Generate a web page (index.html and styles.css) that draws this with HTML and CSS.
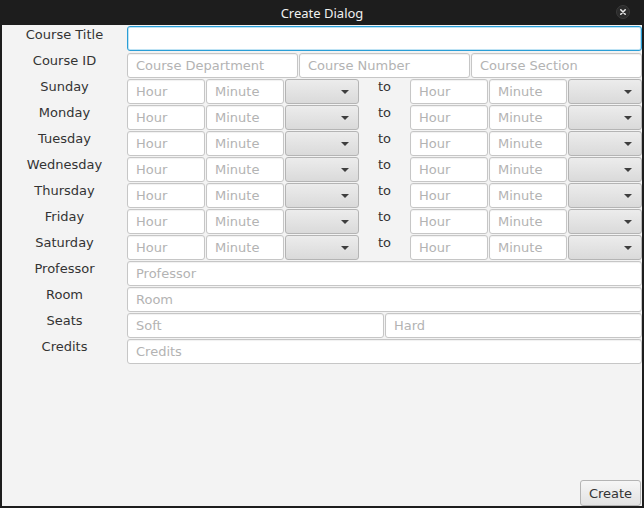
FILE: index.html
```html
<!DOCTYPE html>
<html>
<head>
<meta charset="utf-8">
<link rel="stylesheet" href="styles.css">
</head>
<body>
<div class="window">
  <div class="titlebar">
    <span class="title">Create Dialog</span>
    <span class="close">
      <svg width="14" height="14" viewBox="0 0 14 14"><circle cx="7" cy="7" r="6.5" fill="#2b2b2b" stroke="#3a3a3a" stroke-width="1"/><path d="M4.8 4.8 L9.2 9.2 M9.2 4.8 L4.8 9.2" stroke="#e8e8e8" stroke-width="1.6" stroke-linecap="round"/></svg>
    </span>
  </div>
  <div class="content">
    <div class="form">
      <div class="row first"><div class="label">Course Title</div><div class="fields"><input class="field focused" type="text"></div></div>
      <div class="row"><div class="label">Course ID</div><div class="fields"><input class="field" placeholder="Course Department"><input class="field" placeholder="Course Number"><input class="field" placeholder="Course Section"></div></div>

      <div class="row"><div class="label">Sunday</div><div class="fields time"><input class="field" placeholder="Hour"><input class="field" placeholder="Minute"><div class="combo"><span class="arrow"></span></div><div class="to">to</div><input class="field" placeholder="Hour"><input class="field" placeholder="Minute"><div class="combo"><span class="arrow"></span></div></div></div>
      <div class="row"><div class="label">Monday</div><div class="fields time"><input class="field" placeholder="Hour"><input class="field" placeholder="Minute"><div class="combo"><span class="arrow"></span></div><div class="to">to</div><input class="field" placeholder="Hour"><input class="field" placeholder="Minute"><div class="combo"><span class="arrow"></span></div></div></div>
      <div class="row"><div class="label">Tuesday</div><div class="fields time"><input class="field" placeholder="Hour"><input class="field" placeholder="Minute"><div class="combo"><span class="arrow"></span></div><div class="to">to</div><input class="field" placeholder="Hour"><input class="field" placeholder="Minute"><div class="combo"><span class="arrow"></span></div></div></div>
      <div class="row"><div class="label">Wednesday</div><div class="fields time"><input class="field" placeholder="Hour"><input class="field" placeholder="Minute"><div class="combo"><span class="arrow"></span></div><div class="to">to</div><input class="field" placeholder="Hour"><input class="field" placeholder="Minute"><div class="combo"><span class="arrow"></span></div></div></div>
      <div class="row"><div class="label">Thursday</div><div class="fields time"><input class="field" placeholder="Hour"><input class="field" placeholder="Minute"><div class="combo"><span class="arrow"></span></div><div class="to">to</div><input class="field" placeholder="Hour"><input class="field" placeholder="Minute"><div class="combo"><span class="arrow"></span></div></div></div>
      <div class="row"><div class="label">Friday</div><div class="fields time"><input class="field" placeholder="Hour"><input class="field" placeholder="Minute"><div class="combo"><span class="arrow"></span></div><div class="to">to</div><input class="field" placeholder="Hour"><input class="field" placeholder="Minute"><div class="combo"><span class="arrow"></span></div></div></div>
      <div class="row"><div class="label">Saturday</div><div class="fields time"><input class="field" placeholder="Hour"><input class="field" placeholder="Minute"><div class="combo"><span class="arrow"></span></div><div class="to">to</div><input class="field" placeholder="Hour"><input class="field" placeholder="Minute"><div class="combo"><span class="arrow"></span></div></div></div>

      <div class="row"><div class="label">Professor</div><div class="fields"><input class="field" placeholder="Professor"></div></div>
      <div class="row"><div class="label">Room</div><div class="fields"><input class="field" placeholder="Room"></div></div>
      <div class="row"><div class="label">Seats</div><div class="fields"><input class="field" placeholder="Soft"><input class="field" placeholder="Hard"></div></div>
      <div class="row"><div class="label">Credits</div><div class="fields"><input class="field" placeholder="Credits"></div></div>
    </div>
    <div class="actions"><button class="btn">Create</button></div>
  </div>
</div>
</body>
</html>
```

FILE: styles.css
```css
html, body {
  margin: 0;
  padding: 0;
  background: #1d1d1d;
}
.window {
  width: 644px;
  height: 508px;
  display: flex;
  flex-direction: column;
  background: #1d1d1d;
}
.titlebar {
  height: 25px;
  display: flex;
  align-items: center;
  justify-content: center;
  position: relative;
  color: #f0f0f0;
  font-family: "Noto Sans", sans-serif;
  font-size: 13px;
}
.close {
  position: absolute;
  right: 14px;
  top: 5px;
  width: 14px;
  height: 14px;
  display: flex;
}
.content {
  flex: 1;
  margin: 0 2px 2px 2px;
  background: #f3f3f3;
  display: flex;
  flex-direction: column;
  font-family: "DejaVu Sans", sans-serif;
  font-size: 13px;
  color: #333;
}
.form {
  display: flex;
  flex-direction: column;
  padding-top: 1px;
}
.row {
  display: flex;
  height: 26px;
}
.label {
  flex: 0 0 125px;
  text-align: center;
  line-height: 15px;
  padding-top: 1px;
  color: #333;
}
.fields {
  flex: 1;
  display: flex;
  gap: 1px;
  padding-top: 1px;
  min-width: 0;
}
.row.first .fields {
  padding-top: 0;
}
.field {
  flex: 1;
  min-width: 0;
  box-sizing: border-box;
  height: 25px;
  margin: 0;
  padding: 0 8px;
  border: 1px solid #c6c6c6;
  border-radius: 3px;
  background: #fff;
  box-shadow: inset 0 1px 1px rgba(0,0,0,0.06);
  font-family: "DejaVu Sans", sans-serif;
  font-size: 13px;
  color: #333;
  outline: none;
}
.field::placeholder {
  color: #b3b3b3;
}
.field.focused {
  border: 1px solid #2a9ed6;
  box-shadow: inset 0 0 0 1px #bfe3f4;
}
.time .field {
  flex: 0 0 78px;
}
.combo {
  flex: 0 0 74px;
  box-sizing: border-box;
  height: 25px;
  border: 1px solid #b4b4b4;
  border-radius: 3px;
  background: linear-gradient(#ececec, #dadada);
  display: flex;
  align-items: center;
  justify-content: flex-end;
  padding-right: 9px;
}
.arrow {
  width: 0;
  height: 0;
  border-left: 4px solid transparent;
  border-right: 4px solid transparent;
  border-top: 4px solid #3e3e3e;
  margin-top: 1px;
}
.to {
  flex: 0 0 49px;
  text-align: center;
  line-height: 15px;
  color: #333;
}
.actions {
  margin-top: auto;
  display: flex;
  justify-content: flex-end;
  padding-right: 1px;
}
.btn {
  width: 61px;
  height: 26px;
  box-sizing: border-box;
  border: 1px solid #b4b4b4;
  border-radius: 3px;
  background: linear-gradient(#f6f6f6, #e2e2e2);
  font-family: "DejaVu Sans", sans-serif;
  font-size: 13px;
  color: #333;
  padding: 0;
}
```
